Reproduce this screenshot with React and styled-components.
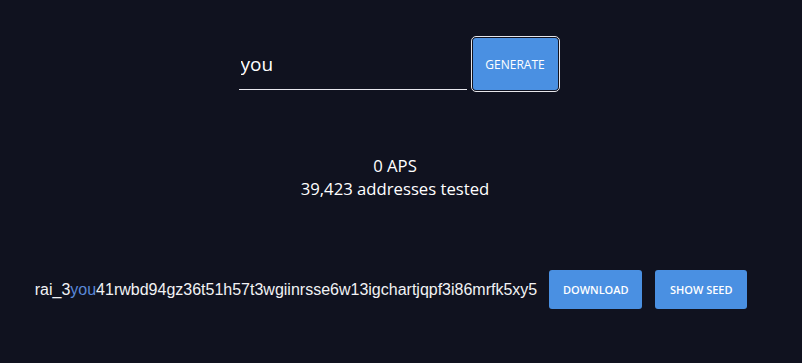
import React, { useState } from 'react';
import styled, { createGlobalStyle } from 'styled-components';

const GlobalStyle = createGlobalStyle`
  html, body {
    margin: 0;
    padding: 0;
    background: #10121f;
  }
  body {
    font-family: 'Open Sans', 'Noto Sans', sans-serif;
    color: #ffffff;
  }
`;

const Page = styled.main`
  min-height: 363px;
  display: flex;
  flex-direction: column;
  align-items: center;
  padding-top: 36px;
  box-sizing: border-box;
`;

const Form = styled.form`
  display: flex;
  align-items: stretch;
  gap: 4px;
  height: 56px;
  margin-right: 4px;
`;

const Input = styled.input`
  width: 228px;
  box-sizing: border-box;
  background: transparent;
  border: none;
  border-bottom: 1px solid #e8e8ee;
  margin-bottom: 2px;
  padding: 0 2px 9px;
  color: #ffffff;
  font-family: 'Open Sans', sans-serif;
  font-size: 19px;
  outline: none;
  align-self: flex-end;
  height: 42px;
`;

const Button = styled.button`
  background: #4a90e2;
  color: #ffffff;
  border: none;
  border-radius: 3px;
  font-family: 'Open Sans', sans-serif;
  font-weight: 600;
  font-size: 11px;
  text-transform: uppercase;
  white-space: nowrap;
  cursor: pointer;
  padding: 0;
  width: ${p => p.$width || 93}px;
  height: 39px;
  box-sizing: border-box;
`;

const GenerateButton = styled(Button)`
  height: 56px;
  border: 2px solid #10121f;
  outline: 1px solid #e6e6ea;
  outline-offset: -1px;
  border-radius: 5px;
  font-weight: 400;
  font-size: 12px;
`;

const Stats = styled.section`
  margin-top: 62px;
  margin-right: 12px;
  text-align: center;
  font-size: 16.7px;
  line-height: 23px;
`;

const Result = styled.section`
  margin-top: 70px;
  display: flex;
  align-items: center;
  gap: 12px;
  margin-right: 20px;
`;

const Address = styled.span`
  font-family: 'Liberation Sans', Arial, sans-serif;
  font-size: 16px;
  color: #f2f2f5;
`;

const Match = styled.span`
  color: #5a88d8;
`;

const Actions = styled.div`
  display: flex;
  gap: 13px;
`;

export default function App() {
  const [prefix, setPrefix] = useState('you');
  return (
    <>
      <GlobalStyle />
      <Page>
        <Form onSubmit={e => e.preventDefault()}>
          <Input value={prefix} onChange={e => setPrefix(e.target.value)} />
          <GenerateButton $width={89} type="submit">Generate</GenerateButton>
        </Form>
        <Stats>
          <div>0 APS</div>
          <div>39,423 addresses tested</div>
        </Stats>
        <Result>
          <Address>
            rai_3<Match>you</Match>41rwbd94gz36t51h57t3wgiinrsse6w13igchartjqpf3i86mrfk5xy5
          </Address>
          <Actions>
            <Button $width={93}>Download</Button>
            <Button $width={92}>Show seed</Button>
          </Actions>
        </Result>
      </Page>
    </>
  );
}
